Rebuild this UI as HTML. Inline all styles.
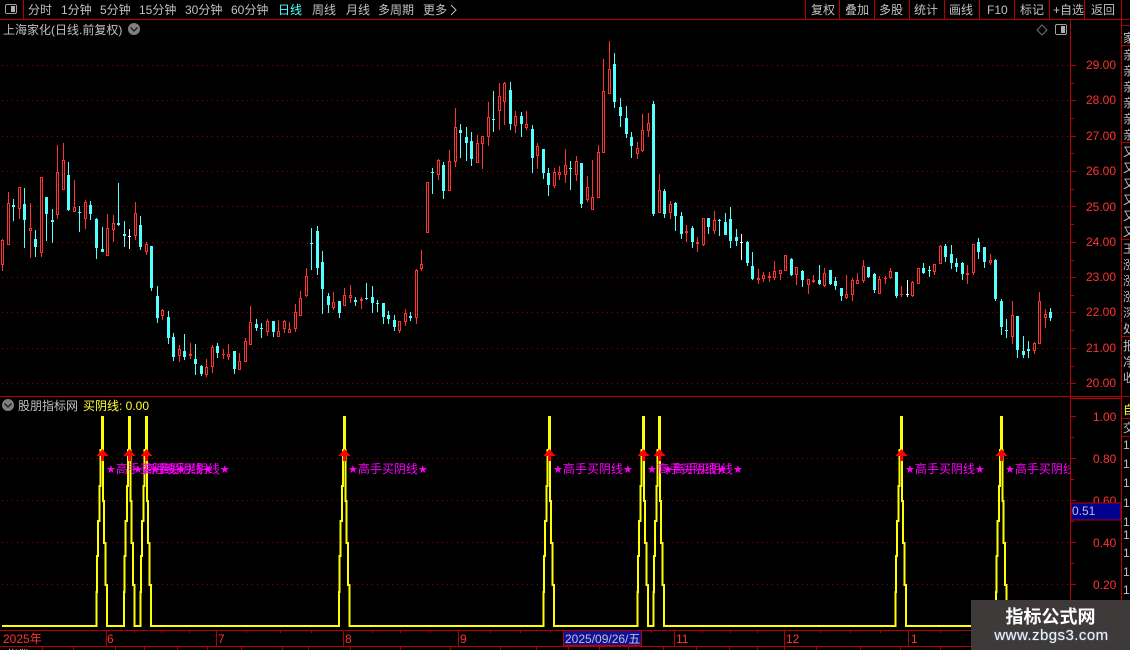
<!DOCTYPE html>
<html><head><meta charset="utf-8">
<style>
html,body{margin:0;padding:0;background:#000;width:1130px;height:650px;overflow:hidden}
svg{display:block;position:absolute;left:0;top:0}
text{font-family:"Liberation Sans","WenQuanYi Zen Hei","Noto Sans CJK SC",sans-serif;font-size:12px;white-space:pre}
.g{fill:#c0c0c0}
.r{fill:#ff3232}
.m{fill:#ff00ff}
.wm{position:absolute;left:971px;top:600px;width:159px;height:50px;background:#3e3a3a;text-align:center;color:#fff;font-family:"Liberation Sans","Noto Sans CJK SC",sans-serif}
.wm b{display:block;font-size:18px;line-height:20px;margin-top:7px;height:20px}
.wm i{display:block;font-style:normal;font-weight:normal;font-size:15px;line-height:18px;color:#e8f0fa;letter-spacing:.45px;text-shadow:0 0 1px #9fc0e8;padding-left:2px}
</style></head><body>
<svg id="s" width="1130" height="650" viewBox="0 0 1130 650" xmlns="http://www.w3.org/2000/svg" shape-rendering="crispEdges">
<defs><clipPath id="c"><rect x="0" y="398" width="1070" height="232"/></clipPath></defs>
<g id="grid" stroke="#990000" stroke-width="1" stroke-dasharray="1 4" fill="none">
<path d="M2 65.5H1070M2 100.5H1070M2 136.5H1070M2 171.5H1070M2 206.5H1070M2 242.5H1070M2 277.5H1070M2 312.5H1070M2 348.5H1070M2 383.5H1070M2 458.5H1070M2 500.5H1070M2 542.5H1070M2 584.5H1070"/>
</g>
<g id="candles"></g>
<g id="lower"></g>
<g clip-path="url(#c)" id="labels"></g>
<g fill="none" stroke="#b80000" stroke-width="1">
<path d="M0 19.5H1130M23.5 0V19M805.5 0V19M839.5 0V19M874.5 0V19M909.5 0V19M944.5 0V19M979.5 0V19M1014.5 0V19M1049.5 0V19M1084.5 0V19M1121.5 0V650"/>
<path d="M1070.5 19V630M0 396.5H1130M1071 398.5H1121M1122 25.5H1130M1122 45.5H1130M1122 142.5H1130M1122 239.5H1130M1122 336.5H1130M1122 418.5H1130M1122 436.5H1130"/>
<path d="M0 630.5H1121M0 646.5H1121M106.5 630V646M216.5 630V646M343.5 630V646M458.5 630V646M563.5 630V646M641.5 630V646M674.5 630V646M784.5 630V646M908.5 630V646"/>
<path d="M134.5 630V633M161.5 630V633M189.5 630V633M246.5 630V633M280.5 630V633M311.5 630V633M372.5 630V633M400.5 630V633M430.5 630V633M490.5 630V633M520.5 630V633M550.5 630V633M651.5 630V633M702.5 630V633M730.5 630V633M757.5 630V633M820.5 630V633M850.5 630V633M880.5 630V633M940.5 630V633"/>
<path d="M42.5 646V650M73.5 646V650M115.5 646V650M144.5 646V650M177.5 646V650M207.5 646V650M241.5 646V650M282.5 646V650M308.5 646V650M350.5 646V650M400.5 646V650M450.5 646V650M500.5 646V650M536.5 646V650M568.5 646V650M599.5 646V650M628.5 646V650M663.5 646V650M696.5 646V650M729.5 646V650M757.5 646V650M784.5 646V650M816.5 646V650M860.5 646V650M900.5 646V650M940.5 646V650"/>
<path d="M1071 65.5H1076M1071 83.5H1074M1071 100.5H1076M1071 118.5H1074M1071 136.5H1076M1071 153.5H1074M1071 171.5H1076M1071 189.5H1074M1071 206.5H1076M1071 224.5H1074M1071 242.5H1076M1071 260.5H1074M1071 277.5H1076M1071 295.5H1074M1071 312.5H1076M1071 330.5H1074M1071 348.5H1076M1071 366.5H1074M1071 383.5H1076"/>
<path d="M1071 416.5H1076M1071 437.5H1074M1071 458.5H1076M1071 479.5H1074M1071 500.5H1076M1071 521.5H1074M1071 542.5H1076M1071 563.5H1074M1071 584.5H1076M1071 605.5H1074"/>
</g>
<g>
<text class="g" x="28" y="14">分时</text>
<text class="g" x="61" y="14">1分钟</text>
<text class="g" x="100" y="14">5分钟</text>
<text class="g" x="139" y="14">15分钟</text>
<text class="g" x="185" y="14">30分钟</text>
<text class="g" x="231" y="14">60分钟</text>
<text x="278" y="14" fill="#54ffff">日线</text>
<text class="g" x="312" y="14">周线</text>
<text class="g" x="346" y="14">月线</text>
<text class="g" x="378" y="14">多周期</text>
<text class="g" x="423" y="14">更多</text>
<path d="M451 5L456 10L451 15" fill="none" stroke="#c0c0c0" shape-rendering="auto"/>
<text class="g" x="811" y="14">复权</text>
<text class="g" x="845" y="14">叠加</text>
<text class="g" x="879" y="14">多股</text>
<text class="g" x="914" y="14">统计</text>
<text class="g" x="949" y="14">画线</text>
<text class="g" x="987" y="14">F10</text>
<text class="g" x="1020" y="14">标记</text>
<text class="g" x="1053" y="14">+自选</text>
<text class="g" x="1091" y="14">返回</text>
<rect x="5.5" y="4.5" width="11" height="9" rx="1.5" fill="none" stroke="#a0a0a0"/>
<rect x="11" y="6" width="4" height="6" fill="#b0b0b0"/>
<text class="g" x="3" y="34">上海家化(日线.前复权)</text>
<circle cx="134" cy="29" r="6" fill="#808080" shape-rendering="auto"/>
<path d="M130.5 27.5L134 31L137.500 27.5" fill="none" stroke="#222" stroke-width="1.5" shape-rendering="auto"/>
<path d="M1042 25L1047 30L1042 35L1037 30Z" fill="none" stroke="#707070" shape-rendering="auto"/>
<rect x="1055.500" y="24.500" width="11" height="10" rx="1.5" fill="none" stroke="#a0a0a0"/>
<rect x="1061" y="26" width="4" height="7" fill="#b0b0b0"/>
<circle cx="8" cy="405" r="6" fill="#808080" shape-rendering="auto"/>
<path d="M4.500 403.500L8 407L11.500 403.500" fill="none" stroke="#222" stroke-width="1.5" shape-rendering="auto"/>
<text class="g" x="18" y="410">股朋指标网</text>
<text x="83" y="410" fill="#ffff33">买阴线: 0.00</text>
<text class="r" x="1086" y="69">29.00</text>
<text class="r" x="1086" y="104">28.00</text>
<text class="r" x="1086" y="140">27.00</text>
<text class="r" x="1086" y="175">26.00</text>
<text class="r" x="1086" y="211">25.00</text>
<text class="r" x="1086" y="246">24.00</text>
<text class="r" x="1086" y="281">23.00</text>
<text class="r" x="1086" y="316">22.00</text>
<text class="r" x="1086" y="352">21.00</text>
<text class="r" x="1086" y="387">20.00</text>
<text class="r" x="1093" y="421">1.00</text>
<text class="r" x="1093" y="463">0.80</text>
<text class="r" x="1093" y="505">0.60</text>
<text class="r" x="1093" y="547">0.40</text>
<text class="r" x="1093" y="589">0.20</text>
<rect x="1071" y="503" width="50" height="17" fill="#000090" stroke="#b80000"/>
<text class="g" x="1072" y="515">0.51</text>
<text class="r" x="3" y="643">2025年</text>
<text class="r" x="107" y="643">6</text>
<text class="r" x="218" y="643">7</text>
<text class="r" x="345" y="643">8</text>
<text class="r" x="460" y="643">9</text>
<text class="r" x="676" y="643">11</text>
<text class="r" x="786" y="643">12</text>
<text class="r" x="911" y="643">1</text>
<rect x="563.500" y="630.500" width="78" height="15" fill="#10109a" stroke="#b80000"/>
<text class="g" x="565" y="643">2025/09/26/五</text>
<text class="g" x="7" y="659">指数</text>
<text class="g" x="50" y="659">+</text>
</g>
<g id="side"></g>
</svg>
<div class="wm"><b>指标公式网</b><i>www.zbgs3.com</i></div>
<script>
var D="2,239,240,265,271,r;8,192,203,245,245,r;13,199,205,207,221,c;19,187,187,209,219,r;24,188,204,220,248,c;30,203,228,231,258,r;35,230,239,247,257,c;41,177,177,253,257,r;46,197,197,214,241,c;52,209,220,222,243,c;57,145,172,215,219,r;63,143,160,190,190,r;68,162,175,210,211,c;74,180,207,212,212,r;79,206,212,213,232,c;85,200,202,219,229,r;90,201,205,214,220,c;96,218,219,248,259,c;102,227,249,252,252,c;107,214,228,256,256,r;113,215,223,230,242,r;118,183,223,225,226,c;124,221,234,236,247,c;129,229,236,237,249,w;135,202,213,236,240,r;140,216,225,247,250,c;146,242,244,252,255,r;151,246,246,288,291,c;157,286,296,318,323,c;162,309,310,316,320,r;168,311,317,338,344,c;173,333,337,357,361,c;179,345,349,356,362,r;184,334,351,357,360,c;190,343,354,356,359,r;195,344,359,364,375,c;201,365,366,374,376,c;206,359,367,375,377,r;212,345,347,367,373,r;217,343,346,353,358,c;223,349,354,355,359,r;228,344,354,357,360,r;234,351,351,369,374,c;239,353,361,370,370,r;245,338,341,362,362,r;250,306,322,345,345,r;256,319,324,328,331,c;261,323,328,329,338,c;267,319,321,332,336,r;273,321,321,332,337,c;278,320,331,337,337,r;284,320,321,329,333,r;289,322,329,333,333,r;295,304,312,329,332,r;300,291,298,316,316,r;306,268,276,296,297,r;311,228,243,244,270,c;317,226,231,268,275,c;322,251,262,289,314,c;328,293,296,305,313,c;333,292,302,308,310,r;339,301,301,313,318,c;344,288,295,306,306,r;350,285,295,298,303,r;355,297,300,302,306,c;361,297,299,301,309,r;366,283,298,299,300,c;372,286,297,303,313,c;377,300,303,304,312,c;383,303,303,317,324,c;388,311,315,319,324,c;394,315,320,327,331,c;399,321,321,331,333,r;405,309,313,322,326,r;410,312,316,318,321,c;416,269,270,318,324,r;421,250,264,269,271,r;427,182,182,233,233,r;432,168,172,173,194,c;438,159,160,175,180,r;443,162,165,191,199,c;449,150,161,191,191,r;455,108,127,162,167,r;460,124,130,133,158,c;466,127,137,143,161,c;471,132,141,159,166,c;477,135,143,163,163,r;482,136,136,144,169,r;488,102,117,137,146,r;493,91,119,120,132,c;499,83,96,111,130,r;504,82,83,102,125,r;510,82,90,124,130,c;515,111,116,126,133,r;521,112,116,124,137,c;526,111,124,128,130,r;532,125,129,158,173,c;537,143,146,156,169,r;543,149,149,173,179,c;548,168,173,185,196,c;554,168,172,186,188,r;559,166,172,175,180,r;565,149,165,175,183,r;570,161,168,169,190,c;576,156,161,175,181,r;581,163,163,204,208,c;587,176,187,200,202,r;592,160,197,210,210,r;598,145,152,198,198,r;603,59,91,153,153,r;609,41,69,94,94,r;614,53,64,102,108,c;620,98,107,116,127,c;626,106,118,134,138,c;631,132,137,146,158,c;637,142,148,154,159,r;642,114,130,151,152,r;648,113,123,131,137,r;653,101,104,214,216,c;659,174,190,213,213,r;664,189,191,214,218,c;670,201,204,213,219,r;675,202,203,216,231,c;681,212,216,234,239,c;686,225,231,233,242,r;692,226,228,242,248,c;697,237,242,244,252,r;703,218,218,245,246,r;708,218,218,227,234,c;714,211,220,231,234,r;719,219,220,221,236,c;725,213,222,235,235,c;730,207,219,241,248,c;736,229,237,241,246,c;741,234,242,243,260,w;747,241,242,263,266,c;752,252,266,279,280,c;758,269,278,280,284,r;763,272,275,279,282,r;769,272,276,278,282,r;774,261,271,278,280,r;780,270,270,274,280,r;785,255,255,271,271,r;791,258,259,275,276,c;796,267,267,275,285,r;802,270,271,280,287,c;808,279,279,285,294,r;813,275,280,282,283,r;819,265,280,284,285,c;824,268,273,286,287,r;830,270,270,284,285,c;835,277,281,286,290,c;841,288,288,296,301,c;846,275,294,298,299,r;852,278,280,295,301,r;857,273,280,284,284,r;863,260,266,281,283,r;868,267,267,277,278,c;874,273,274,290,293,c;879,276,279,294,294,r;885,276,278,279,284,r;890,268,271,278,279,r;896,272,272,296,298,c;901,286,294,295,297,r;907,280,294,295,297,w;912,281,282,296,297,r;918,268,268,284,284,r;923,263,268,273,274,c;929,266,270,271,277,c;934,264,264,272,275,r;940,245,246,264,264,r;945,244,246,257,262,c;951,245,254,263,269,c;956,258,263,267,272,c;962,262,263,274,280,c;967,265,273,275,284,r;973,244,244,273,275,r;978,238,242,252,259,c;984,247,247,262,268,c;990,254,260,263,265,r;995,259,260,299,301,c;1001,299,301,327,335,c;1006,319,330,331,338,c;1012,301,315,337,344,r;1017,316,316,350,358,c;1023,336,351,355,358,c;1028,341,349,351,358,c;1034,342,343,351,354,r;1039,292,301,344,344,r;1045,309,314,318,328,r;1050,308,312,318,321,c";
var col={r:"#ff3232",c:"#54ffff",w:"#ffffff"},h="";
D.split(";").forEach(function(s){
  var a=s.split(","),x=+a[0],hi=+a[1],t=+a[2],b=+a[3],lo=+a[4],k=a[5],f=col[k];
  h+='<rect x="'+x+'" y="'+hi+'" width="1" height="'+(lo-hi)+'" fill="'+f+'"/>';
  h+='<rect x="'+(x-1)+'" y="'+t+'" width="3" height="'+Math.max(b-t,1)+'" fill="'+f+'"/>';
  if(k=="r"&&b-t>2)h+='<rect x="'+x+'" y="'+(t+1)+'" width="1" height="'+(b-t-2)+'" fill="#000"/>';
});
document.getElementById("candles").innerHTML=h;
var P=[102,129.5,146,344.5,549,643,659,901,1001.5];
var L=[[-5.6,592],[-4.8,556],[-4,521],[-2.5,486],[-1.5,450]];
var R=[[.8,501],[2.2,543],[3.5,585],[4.8,626]];
var d="M2 626";
P.forEach(function(c){
  d+="L"+(c-5.6)+" 626";
  L.forEach(function(p){d+="L"+(c+p[0])+" "+p[1];if(p[1]>450){var i=L.indexOf(p);d+="L"+(c+L[i+1][0])+" "+p[1];}});
  d+="L"+(c+.8)+" 450";
  R.forEach(function(p,i){d+="L"+(c+p[0])+" "+p[1];if(i<3)d+="L"+(c+R[i+1][0])+" "+p[1];});
});
d+="L1070 626";
var g='<path d="'+d+'" fill="none" stroke="#ffff00" stroke-width="2"/>';
P.forEach(function(c){
  var x=Math.floor(c);
  g+='<rect x="'+(x-1)+'" y="416" width="3" height="35" fill="#ffff00"/>';
  g+='<path d="M'+(x+.5)+' 449L'+(x+6.5)+' 456H'+(x-5.5)+'Z" fill="#ff0000" shape-rendering="auto"/>';
  g+='<rect x="'+(x-1)+'" y="455" width="3" height="6" fill="#ff0000"/>';
});
document.getElementById("lower").innerHTML=g;
var l="";
P.forEach(function(c){
  var x=Math.floor(c)+4;
  l+='<text class="m" x="'+x+'" y="473"><tspan style="font-family:\'DejaVu Sans\'" font-size="11">★</tspan>高手买阴线<tspan style="font-family:\'DejaVu Sans\'" font-size="11">★</tspan></text>';
});
document.getElementById("labels").innerHTML=l;
var S=[["家",42],["亲",59],["亲",75],["亲",91],["亲",107],["亲",123],["亲",139],["又",156],["又",172],["又",188],["又",204],["又",220],["又",236],["王",253],["涨",269],["涨",285],["涨",301],["深",317],["处",333],["报",350],["净",366],["收",382]];
var q="";
S.forEach(function(a){q+='<text class="g" x="1123" y="'+a[1]+'">'+a[0]+'</text>';});
q+='<text x="1123" y="414" fill="#ffff33">自</text><text class="g" x="1123" y="432">交</text>';
[449,468,487,507,526,539,557,576,594].forEach(function(y){q+='<text class="g" x="1123" y="'+y+'">1</text>';});
document.getElementById("side").innerHTML=q;
</script>
</body></html>
